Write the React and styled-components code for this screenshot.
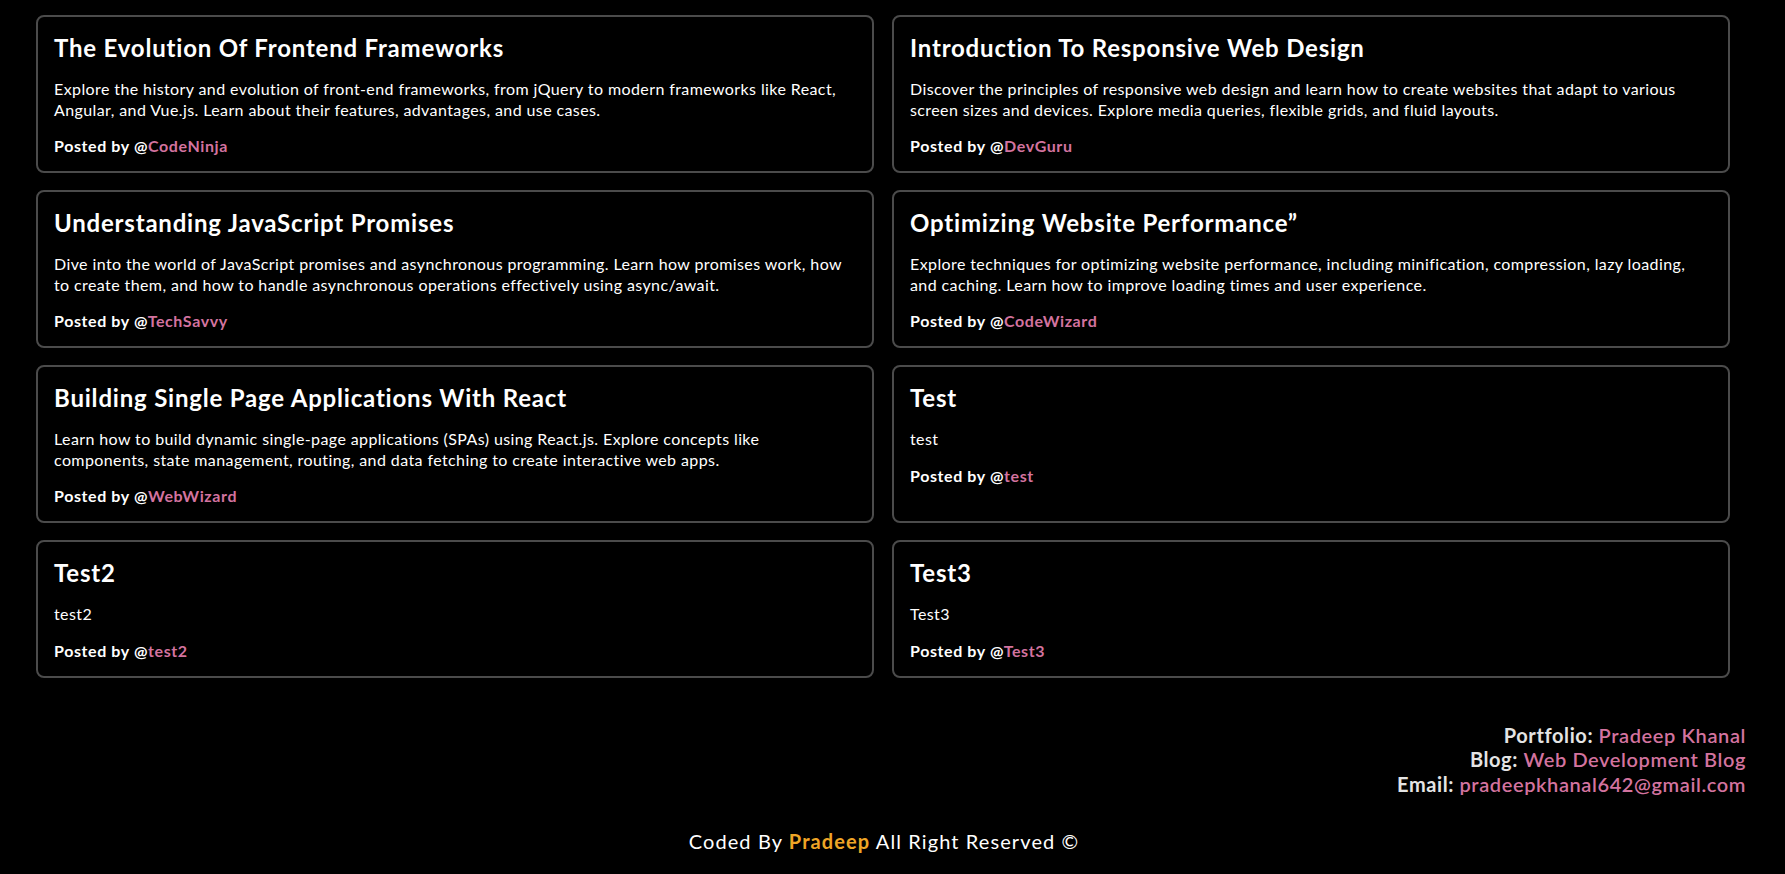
import React from 'react';
import styled, { createGlobalStyle } from 'styled-components';

const GlobalStyle = createGlobalStyle`
  html, body {
    margin: 0;
    padding: 0;
    background: #000;
    color: #fff;
    font-family: Lato, "Noto Sans", sans-serif;
  }
`;

const Page = styled.div`
  min-height: 100vh;
  background: #000;
`;

const PostGrid = styled.section`
  display: grid;
  grid-template-columns: 1fr 1fr;
  gap: 17px 18px;
  padding: 15px 55px 0 36px;
`;

const Card = styled.article`
  border: 2px solid #4b4b4b;
  border-radius: 8px;
  padding: 16px 16px 15px;
  display: flex;
  flex-direction: column;
  gap: 16px;
`;

const Title = styled.h2`
  margin: 0;
  font-size: 24px;
  line-height: 30px;
  font-weight: 700;
  letter-spacing: 0.8px;
  text-transform: capitalize;
`;

const Body = styled.p`
  margin: 0;
  font-size: 16px;
  line-height: 20.5px;
  letter-spacing: 0.4px;
`;

const Author = styled.div`
  font-size: 16px;
  line-height: 20px;
  font-weight: 700;
  letter-spacing: 0.6px;
`;

const Pink = styled.span`
  color: #d3739f;
  font-weight: ${p => p.$weight || 700};
`;

const Contact = styled.footer`
  margin-top: 45px;
  padding-right: 39px;
  text-align: right;
  font-size: 20px;
  line-height: 24.5px;
  letter-spacing: 0.6px;
`;

const ContactLine = styled.div`
  color: #e4e4e4;
  font-weight: 700;
`;

const Copyright = styled.div`
  margin-top: 33px;
  padding-right: 17px;
  text-align: center;
  font-size: 20px;
  line-height: 24px;
  letter-spacing: 1.1px;
  padding-bottom: 20px;
`;

const Orange = styled.span`
  color: #efa526;
  font-weight: 700;
`;

const posts = [
  {
    title: 'The Evolution of Frontend Frameworks',
    body: 'Explore the history and evolution of front-end frameworks, from jQuery to modern frameworks like React, Angular, and Vue.js. Learn about their features, advantages, and use cases.',
    author: 'CodeNinja',
  },
  {
    title: 'Introduction to Responsive Web Design',
    body: 'Discover the principles of responsive web design and learn how to create websites that adapt to various screen sizes and devices. Explore media queries, flexible grids, and fluid layouts.',
    author: 'DevGuru',
  },
  {
    title: 'Understanding JavaScript Promises',
    body: 'Dive into the world of JavaScript promises and asynchronous programming. Learn how promises work, how to create them, and how to handle asynchronous operations effectively using async/await.',
    author: 'TechSavvy',
  },
  {
    title: 'Optimizing Website Performance\u201d',
    body: 'Explore techniques for optimizing website performance, including minification, compression, lazy loading, and caching. Learn how to improve loading times and user experience.',
    author: 'CodeWizard',
  },
  {
    title: 'Building Single Page Applications with React',
    body: 'Learn how to build dynamic single-page applications (SPAs) using React.js. Explore concepts like components, state management, routing, and data fetching to create interactive web apps.',
    author: 'WebWizard',
  },
  { title: 'Test', body: 'test', author: 'test' },
  { title: 'Test2', body: 'test2', author: 'test2' },
  { title: 'Test3', body: 'Test3', author: 'Test3' },
];

function App() {
  return (
    <Page>
      <GlobalStyle />
      <PostGrid>
        {posts.map(post => (
          <Card key={post.title}>
            <Title>{post.title}</Title>
            <Body>{post.body}</Body>
            <Author>
              Posted by @<Pink>{post.author}</Pink>
            </Author>
          </Card>
        ))}
      </PostGrid>
      <Contact>
        <ContactLine>
          Portfolio: <Pink $weight={600}>Pradeep Khanal</Pink>
        </ContactLine>
        <ContactLine>
          Blog: <Pink $weight={600}>Web Development Blog</Pink>
        </ContactLine>
        <ContactLine>
          Email: <Pink $weight={600}>pradeepkhanal642@gmail.com</Pink>
        </ContactLine>
      </Contact>
      <Copyright>
        Coded By <Orange>Pradeep</Orange> All Right Reserved ©
      </Copyright>
    </Page>
  );
}

export default App;
